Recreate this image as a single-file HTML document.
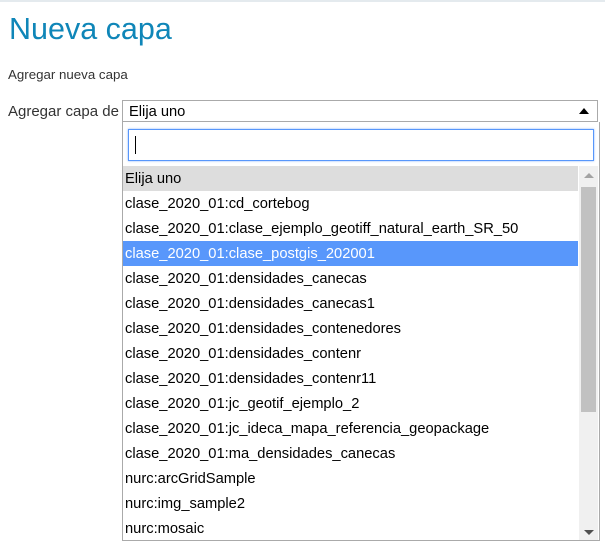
<!DOCTYPE html>
<html><head><meta charset="utf-8"><style>
*{margin:0;padding:0;box-sizing:border-box}
body{width:605px;height:542px;background:#fff;font-family:"Liberation Sans",sans-serif;position:relative;overflow:hidden;color:#222}
.topline{position:absolute;left:0;top:0;width:605px;height:2px;background:#e4eaee}
h1{position:absolute;left:9px;top:12px;font-size:30.5px;font-weight:normal;color:#0f86b8;letter-spacing:0}
.sub{position:absolute;left:8px;top:67px;font-size:13.3px;color:#333}
.lab{position:absolute;left:8px;top:103px;font-size:15px;color:#333}
.sel{position:absolute;left:122px;top:100px;width:476px;height:22px;border:1px solid #aaa;background:#fff;font-size:14.7px;color:#000;padding:3px 6px 0;line-height:17px}
.arrow{position:absolute;right:8px;top:7px;width:0;height:0;border-left:5px solid transparent;border-right:5px solid transparent;border-bottom:6px solid #000}
.drop{position:absolute;left:122px;top:122px;width:478px;height:419px;border:1px solid #aaa;border-top:none;background:#fff;overflow:hidden}
.search{position:absolute;left:5px;top:7px;width:466px;height:32px;border:1px solid #5897fb;box-shadow:0 0 2px #8ab4f8}
.caret{position:absolute;left:6px;top:6px;width:1px;height:18px;background:#000}
.list{position:absolute;left:0;top:44px;width:455px}
.it{height:25px;line-height:26px;font-size:14.7px;color:#000;padding-left:2px;white-space:nowrap}
.g{background:#ddd}
.h{background:#5897fb;color:#fff}
.sb{position:absolute;left:456px;top:44px;width:19px;height:375px;background:#f0f0f0}
.thumb{position:absolute;left:2px;top:21px;width:15px;height:225px;background:#c1c1c1}
.up{position:absolute;left:5px;top:7px;border-left:5px solid transparent;border-right:5px solid transparent;border-bottom:5px solid #a3a3a3}
.dn{position:absolute;left:5px;top:364px;border-left:5px solid transparent;border-right:5px solid transparent;border-top:5px solid #505050}
</style></head><body>
<div class="topline"></div>
<h1>Nueva capa</h1>
<div class="sub">Agregar nueva capa</div>
<div class="lab">Agregar capa de</div>
<div class="sel">Elija uno<div class="arrow"></div></div>
<div class="drop">
<div class="search"><div class="caret"></div></div>
<div class="list">
<div class="it g">Elija uno</div>
<div class="it">clase_2020_01:cd_cortebog</div>
<div class="it">clase_2020_01:clase_ejemplo_geotiff_natural_earth_SR_50</div>
<div class="it h">clase_2020_01:clase_postgis_202001</div>
<div class="it">clase_2020_01:densidades_canecas</div>
<div class="it">clase_2020_01:densidades_canecas1</div>
<div class="it">clase_2020_01:densidades_contenedores</div>
<div class="it">clase_2020_01:densidades_contenr</div>
<div class="it">clase_2020_01:densidades_contenr11</div>
<div class="it">clase_2020_01:jc_geotif_ejemplo_2</div>
<div class="it">clase_2020_01:jc_ideca_mapa_referencia_geopackage</div>
<div class="it">clase_2020_01:ma_densidades_canecas</div>
<div class="it">nurc:arcGridSample</div>
<div class="it">nurc:img_sample2</div>
<div class="it">nurc:mosaic</div>
</div>
<div class="sb"><div class="up"></div><div class="thumb"></div><div class="dn"></div></div>
</div>
</body></html>
